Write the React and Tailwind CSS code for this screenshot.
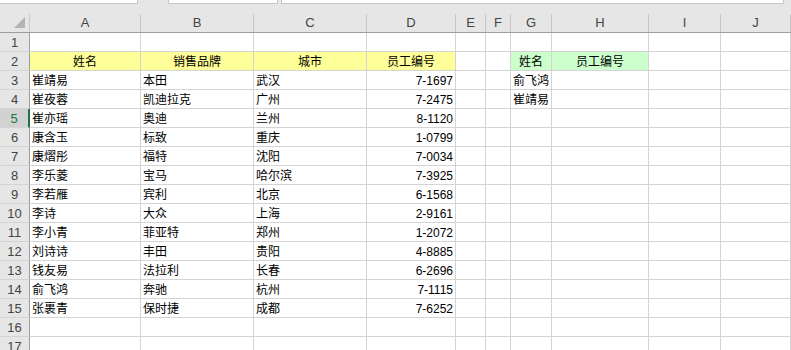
const cols = ["A", "B", "C", "D", "E", "F", "G", "H", "I", "J"];

const rows = [
  ["", "", "", "", "", "", "", ""],
  ["姓名", "销售品牌", "城市", "员工编号", "", "", "姓名", "员工编号"],
  ["崔靖易", "本田", "武汉", "7-1697", "", "", "俞飞鸿", ""],
  ["崔夜蓉", "凯迪拉克", "广州", "7-2475", "", "", "崔靖易", ""],
  ["崔亦瑶", "奥迪", "兰州", "8-1120"],
  ["康含玉", "标致", "重庆", "1-0799"],
  ["康熠彤", "福特", "沈阳", "7-0034"],
  ["李乐菱", "宝马", "哈尔滨", "7-3925"],
  ["李若雁", "宾利", "北京", "6-1568"],
  ["李诗", "大众", "上海", "2-9161"],
  ["李小青", "菲亚特", "郑州", "1-2072"],
  ["刘诗诗", "丰田", "贵阳", "4-8885"],
  ["钱友易", "法拉利", "长春", "6-2696"],
  ["俞飞鸿", "奔驰", "杭州", "7-1115"],
  ["张裹青", "保时捷", "成都", "7-6252"],
  [],
  [],
];

const grid =
  "grid grid-cols-[30px_111px_113px_113px_89px_30px_25px_41px_97px_72px_1fr]";

const Cell = ({ text, row, col }) => {
  let bg = "bg-white";
  let align = "justify-start";
  if (row === 2 && col < 4) {
    bg = "bg-[#ffff99]";
    align = "justify-center";
  }
  if (row === 2 && (col === 6 || col === 7)) {
    bg = "bg-[#ccffcc]";
    align = "justify-center";
  }
  if (row > 2 && col === 3) align = "justify-end";
  return (
    <div
      className={`h-[19px] border-r border-b border-[#d4d4d4] ${bg} flex items-end ${align} px-[2px] pb-[2px] text-[12px] leading-none whitespace-nowrap overflow-visible`}>
      {text}
    </div>
  );
};

const RowHead = ({ n }) => {
  const active = n === 5;
  return (
    <div
      className={`h-[19px] border-b border-[#d4d4d4] flex items-center justify-center text-[13px] leading-none ${
        active
          ? "bg-[#d2d2d2] text-[#217346] border-r-2 border-r-[#217346]"
          : "bg-[#e6e6e6] text-[#444] border-r border-r-[#9e9e9e]"
      }`}>
      {n}
    </div>
  );
};

export default function App() {
  return (
    <div className="w-[791px] h-[350px] overflow-hidden bg-white font-['Liberation_Sans','Noto_Sans_CJK_SC',sans-serif] text-black">
      {/* formula bar remains */}
      <div className="h-[14px] bg-[#e6e6e6] flex items-start">
        <div className="w-[138px] h-[4px] bg-white border-r border-b border-[#c6c6c6]" />
        <div className="w-[110px] h-[4px] ml-[30px] bg-white border-x border-b border-[#c6c6c6]" />
        <div className="w-[503px] h-[4px] ml-[3px] bg-white border-x border-b border-[#c6c6c6]" />
      </div>

      {/* column letters */}
      <div className={`${grid} bg-[#e6e6e6] border-b border-[#9e9e9e]`}>
        <div className="h-[18px] border-r border-[#c8c8c8] flex items-end justify-end pr-[4px] pb-[4px]">
          <svg width="11" height="11" viewBox="0 0 11 11">
            <polygon points="11,0 11,11 0,11" fill="#b4b4b4" />
          </svg>
        </div>
        {cols.map((c) => (
          <div
            key={c}
            className="h-[18px] border-r border-[#c8c8c8] flex items-end justify-center pb-[3px] text-[13px] leading-none text-[#444]">
            {c}
          </div>
        ))}
      </div>

      {rows.map((r, i) => (
        <div key={i} className={grid}>
          <RowHead n={i + 1} />
          {cols.map((c, j) => (
            <Cell key={c} text={r[j] || ""} row={i + 1} col={j} />
          ))}
        </div>
      ))}
    </div>
  );
}
